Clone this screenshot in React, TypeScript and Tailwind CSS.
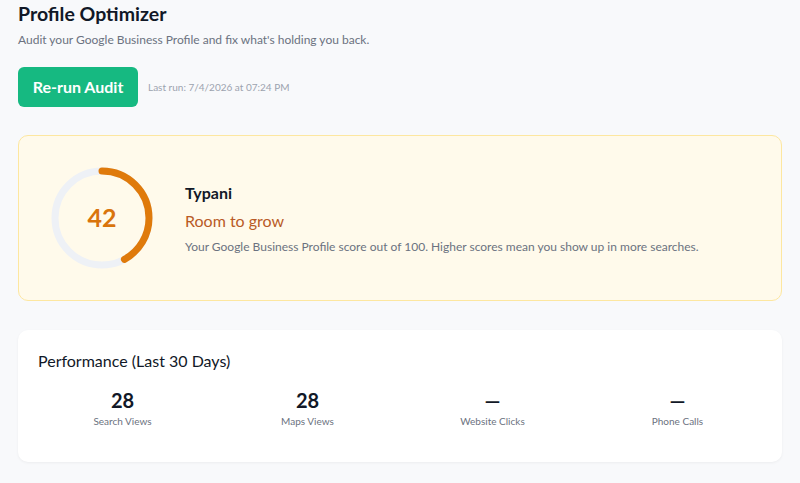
import React from 'react';

const stats = [
  { value: '28', label: 'Search Views' },
  { value: '28', label: 'Maps Views' },
  { value: '—', label: 'Website Clicks' },
  { value: '—', label: 'Phone Calls' },
];

const ScoreRing: React.FC<{ score: number }> = ({ score }) => {
  const r = 47;
  const c = 2 * Math.PI * r;
  return (
    <div className="relative w-[104px] h-[104px] shrink-0">
      <svg width="104" height="104" viewBox="0 0 104 104" className="-rotate-90">
        <circle cx="52" cy="52" r={r} fill="none" stroke="#eef1f6" strokeWidth="7" />
        <circle
          cx="52"
          cy="52"
          r={r}
          fill="none"
          stroke="#df7a0b"
          strokeWidth="7"
          strokeLinecap="round"
          strokeDasharray={`${(score / 100) * c} ${c}`}
        />
      </svg>
      <div className="absolute inset-0 flex items-center justify-center">
        <span className="text-[25px] font-bold text-[#d9740c]">{score}</span>
      </div>
    </div>
  );
};

const App: React.FC = () => {
  return (
    <div className="min-h-screen bg-[#f8f9fb] px-[18px] pb-6 font-['Lato',sans-serif] text-[#111827]">
      <h1 className="text-[19.5px] font-bold leading-[28px]">Profile Optimizer</h1>
      <p className="text-[12px] text-[#6b7280] mt-[3px]">Audit your Google Business Profile and fix what's holding you back.</p>

      <div className="flex items-center gap-[10px] mt-[18px]">
        <button className="w-[120px] h-[40px] rounded-md bg-[#16b981] text-white text-[16px] font-bold">
          Re-run Audit
        </button>
        <span className="text-[10px] text-[#9ca3af]">Last run: 7/4/2026 at 07:24 PM</span>
      </div>

      <section className="mt-[28px] h-[166px] rounded-[10px] border border-[#fde7a0] bg-[#fffaeb] flex items-center pl-[31px] gap-[31px]">
        <ScoreRing score={42} />
        <div className="pt-[1px]">
          <h2 className="text-[16px] font-bold text-[#111827]">Typani</h2>
          <p className="text-[16px] text-[#b95a26] mt-[4px]">Room to grow</p>
          <p className="text-[12px] text-[#6b7280] mt-[5px]">
            Your Google Business Profile score out of 100. Higher scores mean you show up in more searches.
          </p>
        </div>
      </section>

      <section className="mt-[29px] rounded-[10px] bg-white shadow-[0_1px_3px_rgba(0,0,0,0.05)] px-[20px] pt-[19px] pb-[33px]">
        <h3 className="text-[16px] text-[#111827] leading-[24px]">Performance (Last 30 Days)</h3>
        <div className="grid grid-cols-4 gap-4 mt-[14px]">
          {stats.map(s => (
            <div key={s.label} className="flex flex-col items-center">
              <span className="text-[20px] font-bold leading-[26px]">{s.value}</span>
              <span className="text-[10px] text-[#6b7280] mt-[1px]">{s.label}</span>
            </div>
          ))}
        </div>
      </section>
    </div>
  );
};

export default App;
